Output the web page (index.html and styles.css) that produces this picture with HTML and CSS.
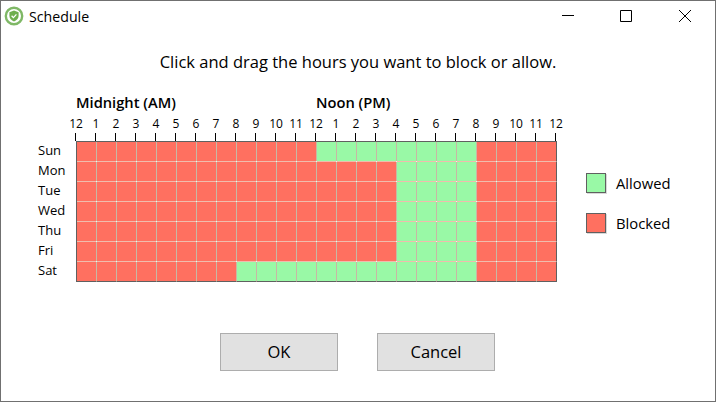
FILE: index.html
```html
<!DOCTYPE html>
<html lang="en">
<head>
    <meta charset="UTF-8">
    <meta name="viewport" content="width=device-width, initial-scale=1.0">
    <title>Schedule</title>
    <link rel="stylesheet" href="styles.css">
</head>
<body>
    <div class="window">
        <div class="titlebar">
            <svg class="app-icon" width="20" height="20" viewBox="0 0 20 20">
                <circle cx="10" cy="10" r="8.2" fill="#fff" stroke="#7fb866" stroke-width="2.4"/>
                <path d="M10 4.6l4.6 1.6v3.6c0 2.8-2 4.6-4.6 5.6-2.6-1-4.6-2.8-4.6-5.6V6.2z" fill="#6fae4f"/>
                <path d="M7.6 9.8l1.8 1.8 3-3.2" fill="none" stroke="#fff" stroke-width="1.3"/>
            </svg>
            <span class="title">Schedule</span>
            <div class="controls">
                <svg width="12" height="12" viewBox="0 0 12 12"><path d="M0 5.5h12" stroke="#000" fill="none"/></svg>
                <svg width="12" height="12" viewBox="0 0 12 12"><path d="M.5.5h11v11H.5z" stroke="#000" fill="none"/></svg>
                <svg class="close" width="12" height="12" viewBox="0 0 12 12"><path d="M0 0l12 12M12 0L0 12" stroke="#000" fill="none"/></svg>
            </div>
        </div>

        <p class="intro">Click and drag the hours you want to block or allow.</p>

        <div class="schedule">
            <div class="days">
                <span>Sun</span><span>Mon</span><span>Tue</span><span>Wed</span><span>Thu</span><span>Fri</span><span>Sat</span>
            </div>
            <div class="chart">
                <div class="periods">
                    <span class="period">Midnight (AM)</span>
                    <span class="period">Noon (PM)</span>
                </div>
                <div class="hours" id="hours"></div>
                <div class="ticks" id="ticks"></div>
                <div class="grid" id="grid"></div>
            </div>
            <div class="legend">
                <div class="legend-item"><span class="swatch allowed"></span>Allowed</div>
                <div class="legend-item"><span class="swatch blocked"></span>Blocked</div>
            </div>
        </div>

        <div class="buttons">
            <button class="btn">OK</button>
            <button class="btn">Cancel</button>
        </div>
    </div>

    <script>
        const labels = [12, 1, 2, 3, 4, 5, 6, 7, 8, 9, 10, 11, 12, 1, 2, 3, 4, 5, 6, 7, 8, 9, 10, 11, 12];
        const hours = document.getElementById("hours");
        const ticks = document.getElementById("ticks");
        const grid = document.getElementById("grid");

        labels.forEach(function (label) {
            const hour = document.createElement("span");
            hour.textContent = label;
            hours.appendChild(hour);
            ticks.appendChild(document.createElement("i"));
        });

        // first allowed hour for each day, all of them run until 8pm
        const allowedFrom = [12, 16, 16, 16, 16, 16, 8];

        allowedFrom.forEach(function (start) {
            for (let h = 0; h < 24; h++) {
                const cell = document.createElement("div");
                cell.className = h >= start && h < 20 ? "cell allowed" : "cell blocked";
                grid.appendChild(cell);
            }
        });
    </script>
</body>
</html>
```

FILE: styles.css
```css
html, body {
    margin: 0;
    padding: 0;
    background-color: white;
}

.window {
    box-sizing: border-box;
    width: 716px;
    height: 402px;
    border: 1px solid #707070;
    background-color: white;
    color: #000;
    font-family: "Open Sans", "Noto Sans", sans-serif;
    overflow: hidden;
}

.titlebar {
    display: flex;
    align-items: center;
    height: 30px;
    padding-left: 3px;
}

.app-icon {
    margin-right: 5px;
}

.title {
    margin-top: 1px;
    font-size: 14.2px;
}

.controls {
    display: flex;
    margin-left: auto;
    gap: 46px;
    padding-right: 24px;
}

.controls .close {
    margin-left: 1px;
}

.intro {
    margin: 19px 0 0;
    font-size: 16.5px;
    line-height: 24px;
    text-align: center;
}

.schedule {
    display: flex;
    margin-top: 19px;
    padding-left: 37px;
}

.days {
    display: flex;
    flex-direction: column;
    width: 38px;
    padding-top: 47px;
    font-size: 13px;
}

.days span {
    height: 20px;
    line-height: 20px;
}

.chart {
    width: 481px;
}

.periods {
    display: flex;
    height: 23px;
    font-size: 14.7px;
    font-weight: 600;
    line-height: 18px;
}

.period {
    width: 240px;
}

.hours,
.ticks {
    display: flex;
    margin: 0 -10px;
}

.hours {
    height: 17px;
    font-size: 12px;
    line-height: 16px;
}

.hours span {
    flex: none;
    width: 20px;
    text-align: center;
}

.ticks {
    height: 8px;
}

.ticks i {
    flex: none;
    width: 1px;
    height: 8px;
    margin: 0 10px 0 9px;
    background-color: #000;
}

.grid {
    display: grid;
    grid-template-columns: repeat(24, 20px);
    grid-auto-rows: 20px;
    box-sizing: border-box;
    width: 481px;
    height: 141px;
    border-left: 1px solid #606060;
    border-top: 1px solid #606060;
}

.cell {
    position: relative;
    box-sizing: border-box;
    border-right: 1px solid #c8b8a4;
    border-bottom: 1px solid #f0bcac;
}

/* small white dot where two grid lines cross */
.cell::after {
    content: "";
    position: absolute;
    right: -1px;
    bottom: -1px;
    width: 1px;
    height: 1px;
    background-color: #f8f0e8;
}

.cell:nth-child(24n) {
    border-right-color: #606060;
}

.cell:nth-child(24n)::after,
.cell:nth-last-child(-n+24)::after {
    display: none;
}

.cell:nth-last-child(-n+24) {
    border-bottom-color: #606060;
}

.allowed {
    background-color: #99f9a6;
}

.blocked {
    background-color: #ff7060;
}

.legend {
    display: flex;
    flex-direction: column;
    gap: 20px;
    margin: 80px 0 0 29px;
    font-size: 14.8px;
}

.legend-item {
    display: flex;
    align-items: center;
    height: 20px;
}

.swatch {
    box-sizing: border-box;
    width: 20px;
    height: 20px;
    margin-right: 10px;
    border: 1px solid #606060;
    box-shadow: 1px 1px 0 #d8d8d8;
}

.buttons {
    display: flex;
    justify-content: center;
    gap: 39px;
    margin-top: 51px;
    padding-right: 1px;
}

.btn {
    width: 118px;
    height: 38px;
    padding: 0 0 2px;
    border: 1px solid #adadad;
    background-color: #e1e1e1;
    color: #000;
    font-family: inherit;
    font-size: 16.5px;
}
```
